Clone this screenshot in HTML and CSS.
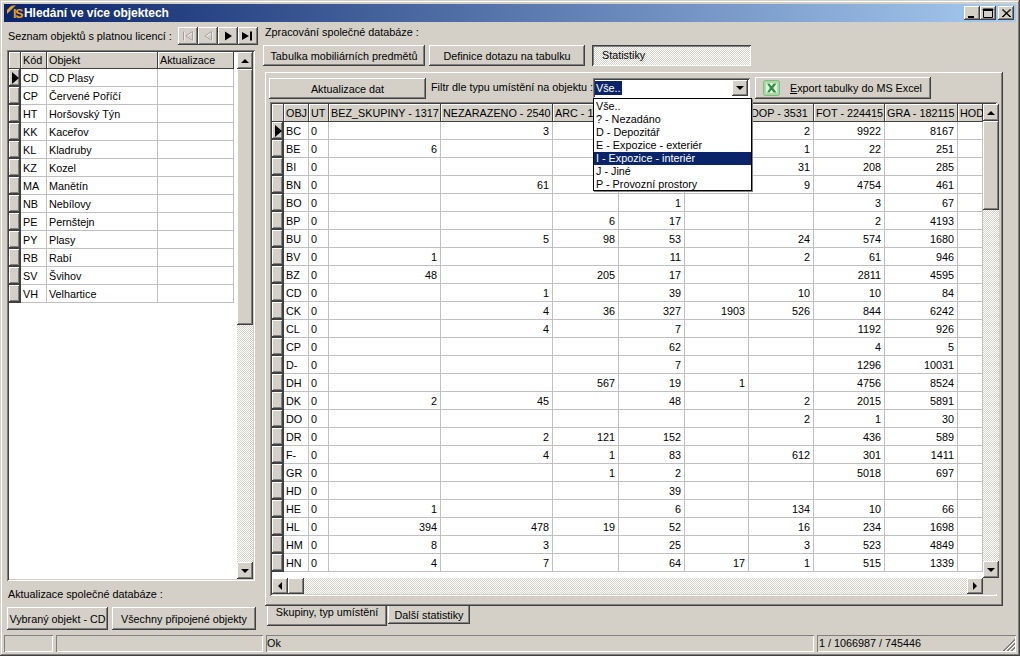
FILE: index.html
```html
<!DOCTYPE html>
<html lang="cs">
<head>
    <meta charset="UTF-8">
    <title>Hledání ve více objektech</title>
    <link rel="stylesheet" href="styles.css">
</head>
<body>
<div class="window">
    <div class="titlebar">
        <svg class="app-icon" width="16" height="16" viewBox="0 0 16 16"><path d="M1 9 L1 5 L5 1 L10 0 Z" fill="#f0a020"/></svg>
        <span class="app-is">IS</span>
        <span class="title-text">Hledání ve více objektech</span>
        <div class="win-controls">
            <div class="win-btn"><svg width="14" height="12"><rect x="3" y="9" width="6" height="2" fill="#000"/></svg></div>
            <div class="win-btn"><svg width="14" height="12"><path d="M2.5 2.5h9v8h-9z M2 2h10v1H2z" fill="none" stroke="#000"/><rect x="2" y="2" width="10" height="2" fill="#000"/></svg></div>
            <div class="win-btn close"><svg width="14" height="12"><path d="M3 2.5 L11 10 M4 2.5 L12 10 M11 2.5 L3 10 M12 2.5 L4 10" stroke="#000" fill="none"/></svg></div>
        </div>
    </div>

    <div class="client">
        <div class="left">
            <div class="left-top">
                <span class="lbl">Seznam objektů s platnou licencí :</span>
                <div class="nav">
                    <div class="nav-btn"><svg width="14" height="12"><path d="M2.5 1.5v9M11.5 1.5L5 6l6.5 4.5z" fill="none" stroke="#fff" transform="translate(.6 .6)"/><path d="M2.5 1.5v9M11.5 1.5L5 6l6.5 4.5z" fill="none" stroke="#a0a0a0"/></svg></div>
                    <div class="nav-btn"><svg width="14" height="12"><path d="M10.5 1.5L4 6l6.5 4.5z" fill="none" stroke="#fff" transform="translate(.6 .6)"/><path d="M10.5 1.5L4 6l6.5 4.5z" fill="none" stroke="#a0a0a0"/></svg></div>
                    <div class="nav-btn"><svg width="14" height="12"><path d="M4 1.5L11 6l-7 4.5z" fill="#000"/></svg></div>
                    <div class="nav-btn"><svg width="14" height="12"><path d="M1 2L8 6l-7 4z" fill="#000"/><rect x="9" y="1.5" width="2" height="9" fill="#000"/></svg></div>
                </div>
            </div>

            <div class="grid list-grid">
                <div class="grid-body">
                    <table class="tbl list-tbl">
                        <colgroup><col class="c12"><col class="c26"><col class="c111"><col class="c76"></colgroup>
                        <tr class="head"><th></th><th>Kód</th><th>Objekt</th><th>Aktualizace</th></tr>
                        <tr><td class="ind cur"></td><td>CD</td><td>CD Plasy</td><td></td></tr>
                        <tr><td class="ind"></td><td>CP</td><td>Červené Poříčí</td><td></td></tr>
                        <tr><td class="ind"></td><td>HT</td><td>Horšovský Týn</td><td></td></tr>
                        <tr><td class="ind"></td><td>KK</td><td>Kaceřov</td><td></td></tr>
                        <tr><td class="ind"></td><td>KL</td><td>Kladruby</td><td></td></tr>
                        <tr><td class="ind"></td><td>KZ</td><td>Kozel</td><td></td></tr>
                        <tr><td class="ind"></td><td>MA</td><td>Manětín</td><td></td></tr>
                        <tr><td class="ind"></td><td>NB</td><td>Nebílovy</td><td></td></tr>
                        <tr><td class="ind"></td><td>PE</td><td>Pernštejn</td><td></td></tr>
                        <tr><td class="ind"></td><td>PY</td><td>Plasy</td><td></td></tr>
                        <tr><td class="ind"></td><td>RB</td><td>Rabí</td><td></td></tr>
                        <tr><td class="ind"></td><td>SV</td><td>Švihov</td><td></td></tr>
                        <tr><td class="ind"></td><td>VH</td><td>Velhartice</td><td></td></tr>
                    </table>
                </div>
                <div class="vscroll">
                    <div class="sb-btn"><i class="arr a-up"></i></div>
                    <div class="sb-thumb list-thumb"></div>
                    <div class="sb-track"></div>
                    <div class="sb-btn"><i class="arr a-down"></i></div>
                </div>
            </div>

            <div class="lbl update-lbl">Aktualizace společné databáze :</div>
            <div class="update-btns">
                <div class="btn btn-one">Vybraný objekt - CD</div>
                <div class="btn btn-all">Všechny připojené objekty</div>
            </div>
        </div>

        <div class="right">
            <div class="lbl right-lbl">Zpracování společné databáze :</div>
            <div class="right-tabs">
                <div class="btn tab-table">Tabulka mobiliárních predmětů</div>
                <div class="btn tab-def">Definice dotazu na tabulku</div>
                <div class="tab-stat">Statistiky</div>
            </div>

            <div class="panel">
                <div class="toolbar">
                    <div class="btn refresh">Aktualizace dat</div>
                    <span class="lbl filter-lbl">Filtr dle typu umístění na objektu :</span>
                    <div class="combo">
                        <span class="combo-val">Vše..</span>
                        <div class="sb-btn combo-btn"><i class="arr a-down"></i></div>
                    </div>
                    <div class="btn export">
                        <svg width="18" height="16" viewBox="0 0 18 16"><rect x="0.5" y="0.5" width="16" height="15" rx="2" fill="#a9d9a4" stroke="#7fb883"/><rect x="3" y="3" width="11" height="10" fill="#e4f3de"/><path d="M4 3.5 L7 8 L4 12.5 H6.5 L8.5 9.7 L10.5 12.5 H13.5 L10.2 8 L13.5 3.5 H10.5 L8.5 6.3 L6.5 3.5 Z" fill="#2f8f48"/></svg>
                        <span><u>E</u>xport tabulky do MS Excel</span>
                    </div>
                </div>

                <div class="grid data-grid">
                    <div class="data-main">
                        <div class="grid-body">
                            <table class="tbl data-tbl">
                                <colgroup><col class="c12"><col class="c25"><col class="c20"><col class="c112"><col class="c112"><col class="c66"><col class="c66"><col class="c64"><col class="c65"><col class="c71"><col class="c73"><col class="c25"></colgroup>
                                <tr class="head"><th></th><th>OBJ</th><th>UT</th><th>BEZ_SKUPINY - 1317</th><th>NEZARAZENO - 2540</th><th>ARC - 1</th><th></th><th></th><th>DOP - 3531</th><th>FOT - 224415</th><th>GRA - 182115</th><th>HOD</th></tr>
                                <tr><td class="ind cur"></td><td>BC</td><td>0</td><td></td><td class="n">3</td><td></td><td></td><td></td><td class="n">2</td><td class="n">9922</td><td class="n">8167</td><td></td></tr>
                                <tr><td class="ind"></td><td>BE</td><td>0</td><td class="n">6</td><td></td><td></td><td></td><td></td><td class="n">1</td><td class="n">22</td><td class="n">251</td><td></td></tr>
                                <tr><td class="ind"></td><td>BI</td><td>0</td><td></td><td></td><td></td><td></td><td></td><td class="n">31</td><td class="n">208</td><td class="n">285</td><td></td></tr>
                                <tr><td class="ind"></td><td>BN</td><td>0</td><td></td><td class="n">61</td><td></td><td></td><td></td><td class="n">9</td><td class="n">4754</td><td class="n">461</td><td></td></tr>
                                <tr><td class="ind"></td><td>BO</td><td>0</td><td></td><td></td><td></td><td class="n">1</td><td></td><td></td><td class="n">3</td><td class="n">67</td><td></td></tr>
                                <tr><td class="ind"></td><td>BP</td><td>0</td><td></td><td></td><td class="n">6</td><td class="n">17</td><td></td><td></td><td class="n">2</td><td class="n">4193</td><td></td></tr>
                                <tr><td class="ind"></td><td>BU</td><td>0</td><td></td><td class="n">5</td><td class="n">98</td><td class="n">53</td><td></td><td class="n">24</td><td class="n">574</td><td class="n">1680</td><td></td></tr>
                                <tr><td class="ind"></td><td>BV</td><td>0</td><td class="n">1</td><td></td><td></td><td class="n">11</td><td></td><td class="n">2</td><td class="n">61</td><td class="n">946</td><td></td></tr>
                                <tr><td class="ind"></td><td>BZ</td><td>0</td><td class="n">48</td><td></td><td class="n">205</td><td class="n">17</td><td></td><td></td><td class="n">2811</td><td class="n">4595</td><td></td></tr>
                                <tr><td class="ind"></td><td>CD</td><td>0</td><td></td><td class="n">1</td><td></td><td class="n">39</td><td></td><td class="n">10</td><td class="n">10</td><td class="n">84</td><td></td></tr>
                                <tr><td class="ind"></td><td>CK</td><td>0</td><td></td><td class="n">4</td><td class="n">36</td><td class="n">327</td><td class="n">1903</td><td class="n">526</td><td class="n">844</td><td class="n">6242</td><td></td></tr>
                                <tr><td class="ind"></td><td>CL</td><td>0</td><td></td><td class="n">4</td><td></td><td class="n">7</td><td></td><td></td><td class="n">1192</td><td class="n">926</td><td></td></tr>
                                <tr><td class="ind"></td><td>CP</td><td>0</td><td></td><td></td><td></td><td class="n">62</td><td></td><td></td><td class="n">4</td><td class="n">5</td><td></td></tr>
                                <tr><td class="ind"></td><td>D-</td><td>0</td><td></td><td></td><td></td><td class="n">7</td><td></td><td></td><td class="n">1296</td><td class="n">10031</td><td></td></tr>
                                <tr><td class="ind"></td><td>DH</td><td>0</td><td></td><td></td><td class="n">567</td><td class="n">19</td><td class="n">1</td><td></td><td class="n">4756</td><td class="n">8524</td><td></td></tr>
                                <tr><td class="ind"></td><td>DK</td><td>0</td><td class="n">2</td><td class="n">45</td><td></td><td class="n">48</td><td></td><td class="n">2</td><td class="n">2015</td><td class="n">5891</td><td></td></tr>
                                <tr><td class="ind"></td><td>DO</td><td>0</td><td></td><td></td><td></td><td></td><td></td><td class="n">2</td><td class="n">1</td><td class="n">30</td><td></td></tr>
                                <tr><td class="ind"></td><td>DR</td><td>0</td><td></td><td class="n">2</td><td class="n">121</td><td class="n">152</td><td></td><td></td><td class="n">436</td><td class="n">589</td><td></td></tr>
                                <tr><td class="ind"></td><td>F-</td><td>0</td><td></td><td class="n">4</td><td class="n">1</td><td class="n">83</td><td></td><td class="n">612</td><td class="n">301</td><td class="n">1411</td><td></td></tr>
                                <tr><td class="ind"></td><td>GR</td><td>0</td><td></td><td></td><td class="n">1</td><td class="n">2</td><td></td><td></td><td class="n">5018</td><td class="n">697</td><td></td></tr>
                                <tr><td class="ind"></td><td>HD</td><td>0</td><td></td><td></td><td></td><td class="n">39</td><td></td><td></td><td></td><td></td><td></td></tr>
                                <tr><td class="ind"></td><td>HE</td><td>0</td><td class="n">1</td><td></td><td></td><td class="n">6</td><td></td><td class="n">134</td><td class="n">10</td><td class="n">66</td><td></td></tr>
                                <tr><td class="ind"></td><td>HL</td><td>0</td><td class="n">394</td><td class="n">478</td><td class="n">19</td><td class="n">52</td><td></td><td class="n">16</td><td class="n">234</td><td class="n">1698</td><td></td></tr>
                                <tr><td class="ind"></td><td>HM</td><td>0</td><td class="n">8</td><td class="n">3</td><td></td><td class="n">25</td><td></td><td class="n">3</td><td class="n">523</td><td class="n">4849</td><td></td></tr>
                                <tr><td class="ind"></td><td>HN</td><td>0</td><td class="n">4</td><td class="n">7</td><td></td><td class="n">64</td><td class="n">17</td><td class="n">1</td><td class="n">515</td><td class="n">1339</td><td></td></tr>
                            </table>
                        </div>
                        <div class="hscroll">
                            <div class="sb-btn"><i class="arr a-left"></i></div>
                            <div class="sb-btn"></div>
                            <div class="sb-track"></div>
                            <div class="sb-btn"><i class="arr a-right"></i></div>
                        </div>
                    </div>
                    <div class="data-side">
                        <div class="vscroll">
                            <div class="sb-btn"><i class="arr a-up"></i></div>
                            <div class="sb-thumb data-thumb"></div>
                            <div class="sb-track"></div>
                            <div class="sb-btn"><i class="arr a-down"></i></div>
                        </div>
                        <div class="corner"></div>
                    </div>
                </div>

                <div class="dropdown">
                    <div>Vše..</div>
                    <div>? - Nezadáno</div>
                    <div>D - Depozitář</div>
                    <div>E - Expozice - exteriér</div>
                    <div class="sel">I - Expozice - interiér</div>
                    <div>J - Jiné</div>
                    <div>P - Provozní prostory</div>
                </div>
            </div>

            <div class="bottom-tabs">
                <div class="btab active">Skupiny, typ umístění</div>
                <div class="btab">Další statistiky</div>
            </div>
        </div>
    </div>

    <div class="statusbar">
        <div class="st st1"></div>
        <div class="st st2"></div>
        <div class="st st3">Ok</div>
        <div class="st st4">1 / 1066987 / 745446</div>
        <svg class="grip" width="14" height="14"><path d="M13 1L1 13M13 2L2 13M13 5L5 13M13 6L6 13M13 9L9 13M13 10L10 13" stroke="#808080" fill="none"/><path d="M13 3L3 13M13 7L7 13M13 11L11 13" stroke="#fff" fill="none"/></svg>
    </div>
</div>
</body>
</html>
```

FILE: styles.css
```css
html, body {
    margin: 0;
    padding: 0;
}
body {
    width: 1020px;
    height: 656px;
    overflow: hidden;
    background: #d4d0c8;
    font-family: "Liberation Sans", Arial, sans-serif;
    font-size: 10.8px;
    color: #000;
}
.window {
    box-sizing: border-box;
    width: 1020px;
    height: 656px;
    padding: 4px;
    display: flex;
    flex-direction: column;
    background: #d4d0c8;
    box-shadow: inset -1px -1px #404040, inset 1px 1px #d4d0c8, inset -2px -2px #808080, inset 2px 2px #fff;
}

/* title bar */
.titlebar {
    position: relative;
    flex: none;
    height: 18px;
    display: flex;
    align-items: center;
    background: linear-gradient(to right, #0a246a, #a6caf0);
    color: #fff;
    font-weight: bold;
    font-size: 12px;
}
.app-icon {
    position: absolute;
    left: 2px;
    top: 1px;
}
.app-is {
    width: 20px;
    padding-left: 9px;
    box-sizing: border-box;
    color: #f0a020;
    font-size: 12px;
    letter-spacing: -1px;
    padding-top: 2px;
}
.title-text {
    letter-spacing: -0.05px;
}
.win-controls {
    margin-left: auto;
    margin-right: 2px;
    display: flex;
}
.win-btn {
    width: 16px;
    height: 14px;
    display: flex;
    align-items: center;
    justify-content: center;
    background: #d4d0c8;
    box-shadow: inset -1px -1px #404040, inset 1px 1px #fff, inset -2px -2px #808080;
}
.close {
    margin-left: 2px;
}

/* bevels */
.btn, .sb-btn, .sb-thumb, .nav-btn, .ind, .tbl th {
    background: #d4d0c8;
    box-shadow: inset -1px -1px #404040, inset 1px 1px #fff, inset -2px -2px #808080;
}
.btn {
    box-sizing: border-box;
    display: flex;
    align-items: center;
    justify-content: center;
    white-space: nowrap;
}

/* main area */
.client {
    flex: 1;
    display: flex;
    min-height: 0;
}
.left {
    flex: none;
    width: 259px;
    box-sizing: border-box;
    padding-left: 3px;
    display: flex;
    flex-direction: column;
}
.left-top {
    display: flex;
    align-items: center;
    height: 20px;
    margin-top: 4px;
    margin-bottom: 4px;
}
.left-top .lbl {
    margin-left: 1px;
    width: 170px;
    white-space: nowrap;
}
.nav {
    display: flex;
}
.nav-btn {
    width: 20px;
    height: 18px;
    display: flex;
    align-items: center;
    justify-content: center;
}
.grid {
    display: flex;
    background: #fff;
    box-shadow: inset 1px 1px #808080, inset -1px -1px #fff, inset 2px 2px #404040, inset -2px -2px #d4d0c8;
    padding: 2px;
    box-sizing: border-box;
}
.list-grid {
    width: 248px;
    height: 531px;
    justify-content: space-between;
}
.grid-body {
    flex: 1;
    min-height: 0;
    overflow: hidden;
}
.tbl {
    table-layout: fixed;
    border-collapse: separate;
    border-spacing: 0;
}
.list-tbl {
    width: 225px;
}
.data-tbl {
    width: 711px;
}
.c12 { width: 12px; }
.c20 { width: 20px; }
.c25 { width: 25px; }
.c26 { width: 26px; }
.c64 { width: 64px; }
.c65 { width: 65px; }
.c66 { width: 66px; }
.c71 { width: 71px; }
.c73 { width: 73px; }
.c76 { width: 76px; }
.c111 { width: 111px; }
.c112 { width: 112px; }
.tbl th, .tbl td {
    box-sizing: border-box;
    padding: 0 2px;
    overflow: hidden;
    white-space: nowrap;
}
.tbl th {
    height: 17px;
    line-height: 17px;
    font-weight: normal;
    text-align: left;
    box-shadow: inset -1px -1px #404040, inset 1px 1px #fff;
}
.data-tbl th {
    height: 18px;
}
.tbl td {
    height: 18px;
    line-height: 15px;
    padding-top: 2px;
    border-right: 1px solid #c0c0c0;
    border-bottom: 1px solid #c0c0c0;
}
.tbl td.n {
    text-align: right;
    padding-right: 3px;
}
.tbl td.ind {
    position: relative;
    padding: 0;
    border-right: 1px solid #404040;
    border-bottom: 1px solid #404040;
}
.ind.cur::after {
    content: "";
    position: absolute;
    left: 3px;
    top: 3px;
    border-left: 7px solid #000;
    border-top: 6px solid transparent;
    border-bottom: 6px solid transparent;
}

/* scrollbars */
.vscroll {
    flex: none;
    width: 16px;
    display: flex;
    flex-direction: column;
}
.hscroll {
    flex: none;
    height: 16px;
    display: flex;
}
.vscroll .sb-btn {
    flex: none;
    height: 17px;
}
.hscroll .sb-btn {
    flex: none;
    width: 16px;
}
.sb-btn {
    display: flex;
    align-items: center;
    justify-content: center;
}
.sb-track {
    flex: 1;
    background: repeating-conic-gradient(#fff 0 25%, #d4d0c8 0 50%) 0 0 / 2px 2px;
}
.list-thumb {
    flex: none;
    height: 256px;
}
.data-thumb {
    flex: none;
    height: 89px;
}
.arr {
    display: block;
    width: 0;
    height: 0;
}
.a-up {
    border-left: 4px solid transparent;
    border-right: 4px solid transparent;
    border-bottom: 4px solid #000;
}
.a-down {
    border-left: 4px solid transparent;
    border-right: 4px solid transparent;
    border-top: 4px solid #000;
}
.a-left {
    border-top: 4px solid transparent;
    border-bottom: 4px solid transparent;
    border-right: 4px solid #000;
}
.a-right {
    border-top: 4px solid transparent;
    border-bottom: 4px solid transparent;
    border-left: 4px solid #000;
}

/* left bottom */
.update-lbl {
    margin: 6px 0 0 1px;
    height: 20px;
    line-height: 14px;
}
.update-btns {
    display: flex;
    gap: 4px;
}
.btn-one {
    width: 101px;
    height: 23px;
}
.btn-all {
    width: 144px;
    height: 23px;
}

/* right side */
.right {
    flex: none;
    width: 753px;
    display: flex;
    flex-direction: column;
}
.right-lbl {
    margin: 3px 0 0 2px;
    height: 20px;
    line-height: 14px;
    white-space: nowrap;
}
.right-tabs {
    display: flex;
    height: 21px;
}
.right-tabs .btn {
    height: 21px;
}
.tab-table {
    width: 162px;
    margin-right: 4px;
}
.tab-def {
    width: 156px;
    margin-right: 7px;
}
.tab-stat {
    width: 159px;
    height: 21px;
    box-sizing: border-box;
    padding-left: 10px;
    line-height: 21px;
    background: repeating-conic-gradient(#fff 0 25%, #d4d0c8 0 50%) 0 0 / 2px 2px;
    box-shadow: inset 1px 1px #404040, inset -1px -1px #fff, inset 2px 2px #808080;
}
.panel {
    position: relative;
    box-sizing: border-box;
    width: 738px;
    height: 534px;
    margin: 6px 0 0 2px;
    padding: 5px 0 0 4px;
    box-shadow: inset -1px -1px #404040, inset 1px 1px #fff, inset -2px -2px #808080;
}
.toolbar {
    display: flex;
    align-items: flex-start;
    height: 25px;
}
.refresh {
    width: 157px;
    height: 21px;
    margin-top: 1px;
}
.filter-lbl {
    margin: 4px 0 0 5px;
    width: 163px;
    white-space: nowrap;
}
.combo {
    box-sizing: border-box;
    width: 157px;
    height: 20px;
    margin: 1px 0 0 -1px;
    padding: 2px;
    display: flex;
    justify-content: space-between;
    background: #fff;
    box-shadow: inset 1px 1px #808080, inset -1px -1px #fff, inset 2px 2px #404040;
}
.combo-val {
    height: 14px;
    margin: 1px 0 0 0;
    padding: 0 1px;
    line-height: 14px;
    background: #0a246a;
    color: #fff;
}
.combo-btn {
    width: 16px;
    height: 16px;
}
.export {
    width: 176px;
    height: 22px;
    margin-left: 5px;
    justify-content: flex-start;
    padding-left: 8px;
    gap: 9px;
}
.data-grid {
    width: 727px;
    height: 494px;
    margin-left: 1px;
}
.data-main {
    width: 711px;
    display: flex;
    flex-direction: column;
}
.data-side {
    width: 16px;
    display: flex;
    flex-direction: column;
}
.data-side .vscroll {
    flex: 1;
}
.corner {
    flex: none;
    height: 16px;
    background: #d4d0c8;
}
.dropdown {
    position: absolute;
    left: 328px;
    top: 26px;
    width: 159px;
    height: 93px;
    box-sizing: border-box;
    padding: 1px;
    background: #fff;
    border: 1px solid #000;
    box-shadow: 1px 1px #808080;
    line-height: 13px;
    white-space: nowrap;
}
.dropdown div {
    height: 13px;
    padding-left: 1px;
}
.dropdown .sel {
    margin: 0 -1px;
    padding-left: 2px;
    background: #0a246a;
    color: #fff;
}

/* bottom tabs */
.bottom-tabs {
    display: flex;
    padding-left: 4px;
    height: 21px;
}
.btab {
    box-sizing: border-box;
    width: 82px;
    height: 18px;
    line-height: 19px;
    text-align: center;
    background: #d4d0c8;
    box-shadow: inset -1px -1px #404040, inset 1px 0 #fff, inset -2px -2px #808080;
}
.btab.active {
    width: 120px;
    height: 21px;
    margin-top: -1px;
    margin-right: 1px;
    line-height: 15px;
}

/* status bar */
.statusbar {
    position: relative;
    flex: none;
    height: 17px;
    display: flex;
    gap: 3px;
}
.st {
    box-sizing: border-box;
    height: 17px;
    line-height: 17px;
    padding-left: 1px;
    box-shadow: inset 1px 1px #808080, inset -1px -1px #fff;
}
.st1 { width: 49px; }
.st2 { width: 207px; }
.st3 { width: 548px; }
.st4 { width: 199px; padding-left: 2px; }
.grip {
    position: absolute;
    right: 0;
    bottom: 0;
}
```
